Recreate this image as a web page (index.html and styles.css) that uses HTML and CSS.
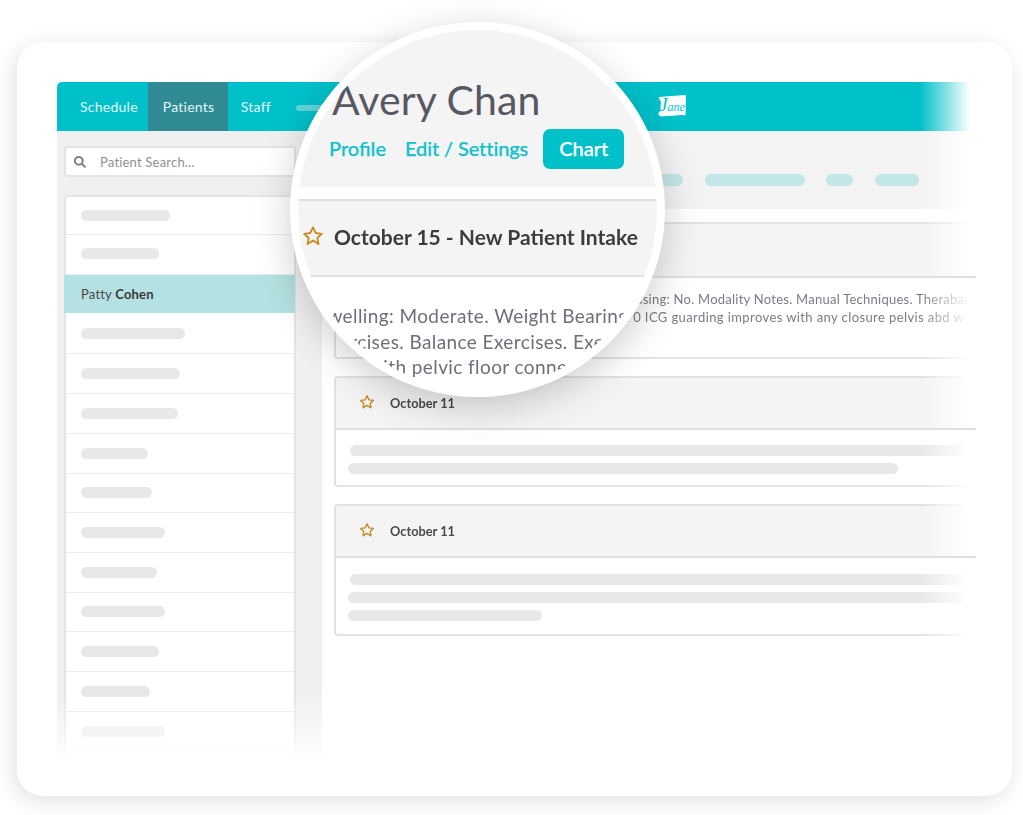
FILE: index.html
```html
<!DOCTYPE html>
<html lang="en">
<head>
<meta charset="utf-8">
<title>Jane patient chart</title>
<link rel="stylesheet" href="styles.css">
</head>
<body>
<svg class="defs" width="0" height="0" aria-hidden="true">
  <symbol id="star" viewBox="0 0 24 24"><path d="M12 2.6l2.9 6.1 6.7.9-4.9 4.6 1.3 6.6L12 17l-6 3.8 1.3-6.6L2.4 9.6l6.7-.9z"/></symbol>
</svg>
<main class="page">
  <section class="frame">
    <div class="app">
      <nav class="nav">
        <a class="tab tab-first">Schedule</a>
        <a class="tab tab-active">Patients</a>
        <a class="tab tab-staff">Staff</a>
        <span class="nav-pill"></span>
        <svg class="logo" viewBox="0 0 30 24" width="30" height="24">
          <path class="logo-card" d="M2 3.5 28.5 1.5 28 21 26 20.5 3.5 22 1.5 20 3.5 17 4.5 8z"/>
          <text class="logo-text" x="2.5" y="17"><tspan class="logo-j">J</tspan>ane</text>
        </svg>
      </nav>
      <div class="body">
        <aside class="side">
          <div class="search">
            <svg class="search-icon" viewBox="0 0 14 14" width="14" height="14"><circle cx="5.8" cy="5.8" r="3.9"/><path d="M8.8 8.8 12.4 12.4"/></svg>
            <span>Patient Search...</span>
          </div>
          <ul class="list">
            <li class="row"><span class="pill w89"></span></li>
            <li class="row"><span class="pill w78"></span></li>
            <li class="row row-active"><span>Patty <b>Cohen</b></span></li>
            <li class="row"><span class="pill w104"></span></li>
            <li class="row"><span class="pill w99"></span></li>
            <li class="row"><span class="pill w97"></span></li>
            <li class="row"><span class="pill w67"></span></li>
            <li class="row"><span class="pill w71"></span></li>
            <li class="row"><span class="pill w84"></span></li>
            <li class="row"><span class="pill w76"></span></li>
            <li class="row"><span class="pill w84"></span></li>
            <li class="row"><span class="pill w78"></span></li>
            <li class="row"><span class="pill w69"></span></li>
            <li class="row"><span class="pill w84"></span></li>
            <li class="row"></li>
          </ul>
          <div class="side-fade"></div>
        </aside>
        <div class="content">
          <div class="subhead">
            <span class="tpill t44"></span>
            <span class="tpill t100"></span>
            <span class="tpill t27"></span>
            <span class="tpill t44b"></span>
          </div>
          <article class="card">
            <header class="card-head card-head-big"></header>
            <div class="card-text">
              <p>Dressing: No. Modality Notes. Manual Techniques. Theraband</p>
              <p class="line-two">. 0 ICG guarding improves with any closure pelvis abd w</p>
            </div>
          </article>
          <article class="card">
            <header class="card-head">
              <svg class="star"><use href="#star"/></svg>
              <h3>October 11</h3>
            </header>
            <div class="skeleton">
              <span class="bar bar-in bar-full"></span>
              <span class="bar bar-short"></span>
            </div>
          </article>
          <article class="card">
            <header class="card-head">
              <svg class="star"><use href="#star"/></svg>
              <h3>October 11</h3>
            </header>
            <div class="skeleton skeleton-tall">
              <span class="bar bar-in bar-full"></span>
              <span class="bar bar-long"></span>
              <span class="bar bar-tiny"></span>
            </div>
          </article>
          <div class="content-fade"></div>
        </div>
      </div>
    </div>
    <div class="lens">
      <div class="lens-inner">
        <div class="lens-top">
          <h1>Avery Chan</h1>
          <div class="lens-links">
            <a>Profile</a>
            <a class="edit">Edit / Settings</a>
            <a class="chart">Chart</a>
          </div>
        </div>
        <div class="lens-head">
          <svg class="lens-star"><use href="#star"/></svg>
          <h2>October 15 - New Patient Intake</h2>
        </div>
        <div class="lens-text">
          <p class="l1">Swelling: Moderate. Weight Bearing: Full</p>
          <p class="l2">Exercises. Balance Exercises. Exercises</p>
          <p class="l3">with pelvic floor connection</p>
        </div>
      </div>
    </div>
  </section>
</main>
</body>
</html>
```

FILE: styles.css
```css
* { box-sizing: border-box; }
html, body { margin: 0; height: 100%; background: #fff; }
body { font-family: Lato, "Open Sans", sans-serif; overflow: hidden; }
p, h1, h2, h3, ul { margin: 0; padding: 0; }
ul { list-style: none; }
.defs { position: absolute; }

.page { height: 815px; padding: 42px 11px 19px 17px; display: flex; }
.frame {
  position: relative;
  flex: 1;
  min-width: 0;
  background: #fff;
  border-radius: 26px;
  box-shadow: -3px 5px 22px rgba(0, 0, 0, .12);
  padding: 40px 36px 33px 40px;
  filter: blur(.35px);
}
.app { height: 681px; width: 919px; display: flex; flex-direction: column; }

.nav {
  height: 49px;
  background: #00c1ca;
  border-radius: 5px 0 0 0;
  display: flex;
  align-items: stretch;
  color: #e4f8f9;
  font-size: 14px;
}
.tab { display: flex; align-items: center; padding: 0 15px; letter-spacing: .25px; }
.tab-first { padding: 0 10px 0 23px; }
.tab-active { background: #2f8a93; width: 80px; }
.tab-staff { padding: 0 13px; }
.nav-pill { align-self: center; margin: 2px 0 0 12px; width: 35px; height: 6px; border-radius: 3px; background: #62d4da; }
.logo { align-self: center; margin: 0 0 2px 326px; }
.logo-card { fill: #fff; stroke: #fff; stroke-linejoin: round; }
.logo-text { font: italic 400 12px "Liberation Serif", serif; fill: #00c1ca; }
.logo-j { font-size: 18px; }

.body { flex: 1; display: flex; min-height: 0; }

.side { position: relative; width: 265px; flex: none; background: #f0f0f0; padding: 15px 26px 0 7px; overflow: hidden; }
.search {
  height: 31px;
  background: #fff;
  border: 2px solid #e4e4e4;
  border-radius: 4px;
  display: flex;
  align-items: center;
  padding-left: 7px;
  color: #8f8f8f;
  font-size: 13px;
  letter-spacing: .2px;
}
.search-icon { fill: none; stroke: #808080; stroke-width: 2; margin-right: 13px; }
.list {
  margin-top: 18px;
  background: #fff;
  border: 2px solid #e4e4e4;
  border-radius: 4px 4px 0 0;
  border-bottom: 0;
}
.row {
  height: 39.7px;
  border-bottom: 1px solid #ececec;
  display: flex;
  align-items: center;
  padding-left: 15px;
  font-size: 13px;
  color: #4a4a4a;
  letter-spacing: .2px;
}
.row:first-child { height: 38.2px; }
.row:nth-child(2) { height: 40.2px; padding-bottom: 3px; }
.row:nth-child(4) { height: 41.5px; padding-top: 1px; }
.row-active { background: #b4e1e1; height: 37.6px; border-bottom: 0; margin: 0 -1px 0 -2px; padding-left: 17px; padding-bottom: 1px; }
.row-active b { color: #3a3a3a; font-weight: 700; }
.pill { height: 11px; border-radius: 6px; background: #e8e8e8; }
.w67 { width: 67px; } .w69 { width: 69px; } .w71 { width: 71px; } .w76 { width: 76px; }
.w78 { width: 78px; } .w84 { width: 84px; } .w89 { width: 89px; } .w97 { width: 97px; }
.w99 { width: 99px; } .w104 { width: 104px; }
.side-fade { position: absolute; left: 0; right: 0; bottom: 0; height: 70px; background: linear-gradient(rgba(255,255,255,0), #fff); }

.content { position: relative; flex: 1; min-width: 0; }
.subhead {
  height: 78px;
  background: #f3f3f3;
  display: flex;
  align-items: center;
  justify-content: flex-end;
  gap: 21.7px;
  padding: 0 57px 0 0;
  margin-bottom: 13px;
}
.tpill { height: 12px; border-radius: 6px; background: #c3e7e8; margin-top: 20px; }
.t44 { width: 44px; } .t100 { width: 100px; } .t27 { width: 27px; } .t44b { width: 44px; }

.card {
  margin: 0 0 17px 12px;
  border: 2px solid #e2e2e2;
  border-right: 0;
  border-radius: 4px 0 0 4px;
  background: #fff;
}
.card-head {
  position: relative;
  height: 50px;
  background: #f4f4f4;
  display: flex;
  align-items: center;
  padding-left: 23px;
  gap: 15px;
}
.card-head::after {
  content: "";
  position: absolute;
  left: 0; right: 0; bottom: -2px;
  height: 2px;
  background: #e0e0e0;
  z-index: 2;
}
.card-head-big { height: 52px; }
.star { width: 16px; height: 16px; fill: none; stroke: #c98a1f; stroke-width: 2; stroke-linejoin: round; margin-top: -2px; }
.card h3 { font-size: 12.8px; font-weight: 700; color: #4a4a4a; }
.card-text { height: 81px; padding: 14px 0 0 0; color: #7b7b86; font-size: 13px; line-height: 18px; white-space: nowrap; overflow: hidden; letter-spacing: .25px; }
.card-text p { padding-left: 279px; }
.card-text .line-two { padding-left: 290px; letter-spacing: .4px; }
.skeleton { padding: 17px 0 0 12px; display: flex; flex-direction: column; gap: 7px; height: 57px; }
.skeleton-tall { height: 78px; padding-top: 18px; }
.bar { height: 11px; border-radius: 6px; background: #e8e8e8; }
.bar-in { margin-left: 2px; }
.bar-full { width: 615px; }
.bar-short { width: 550px; }
.bar-long { width: 617px; }
.bar-tiny { width: 194px; }
.content-fade {
  position: absolute;
  top: -49px; bottom: 0;
  right: 0;
  width: 56px;
  background: linear-gradient(90deg, rgba(255,255,255,0), #fff 50px);
  z-index: 1;
  pointer-events: none;
}

.lens {
  position: absolute;
  left: 273px; top: -20px;
  width: 375px; height: 375px;
  border-radius: 50%;
  background: #fff;
  padding: 8px;
  box-shadow: 0 10px 38px rgba(0, 0, 0, .2);
  z-index: 5;
}
.lens-inner { width: 100%; height: 100%; border-radius: 50%; overflow: hidden; background: #fff; }
.lens-top { height: 157px; background: #f4f4f4; padding: 44px 0 0 34px; }
.lens h1 { font-size: 41px; font-weight: 400; line-height: 52px; color: #585863; letter-spacing: .1px; }
.lens-links { display: flex; align-items: center; gap: 19px; margin: 3px 0 0 -3px; font-size: 20px; font-weight: 500; color: #12c2cb; -webkit-text-stroke: .25px currentColor; }
.lens-links a { padding-bottom: 3px; }
.lens-links .edit { margin-right: -4px; letter-spacing: -.1px; }
.lens-links .chart { background: #00c1ca; color: #fff; border-radius: 7px; width: 81px; height: 40px; display: flex; align-items: center; justify-content: center; padding-bottom: 2px; }
.lens-head {
  margin-top: 12px;
  height: 78px;
  background: #f4f4f4;
  border-top: 2px solid #e0e0e0;
  border-bottom: 2px solid #e0e0e0;
  display: flex;
  align-items: center;
  padding: 0 0 0 4px;
  gap: 10px;
}
.lens-star { width: 22px; height: 22px; fill: none; stroke: #c98a1f; stroke-width: 2; stroke-linejoin: round; margin-top: -4px; }
.lens h2 { font-size: 21px; font-weight: 700; color: #3c3c3c; margin-top: -4px; }
.lens-text { padding-top: 26px; color: #6f6f7a; font-size: 19px; line-height: 25.5px; white-space: nowrap; letter-spacing: .4px; }
.l1 { padding-left: 19px; }
.l2 { padding-left: 21px; }
.l3 { padding-left: 70px; }
```
